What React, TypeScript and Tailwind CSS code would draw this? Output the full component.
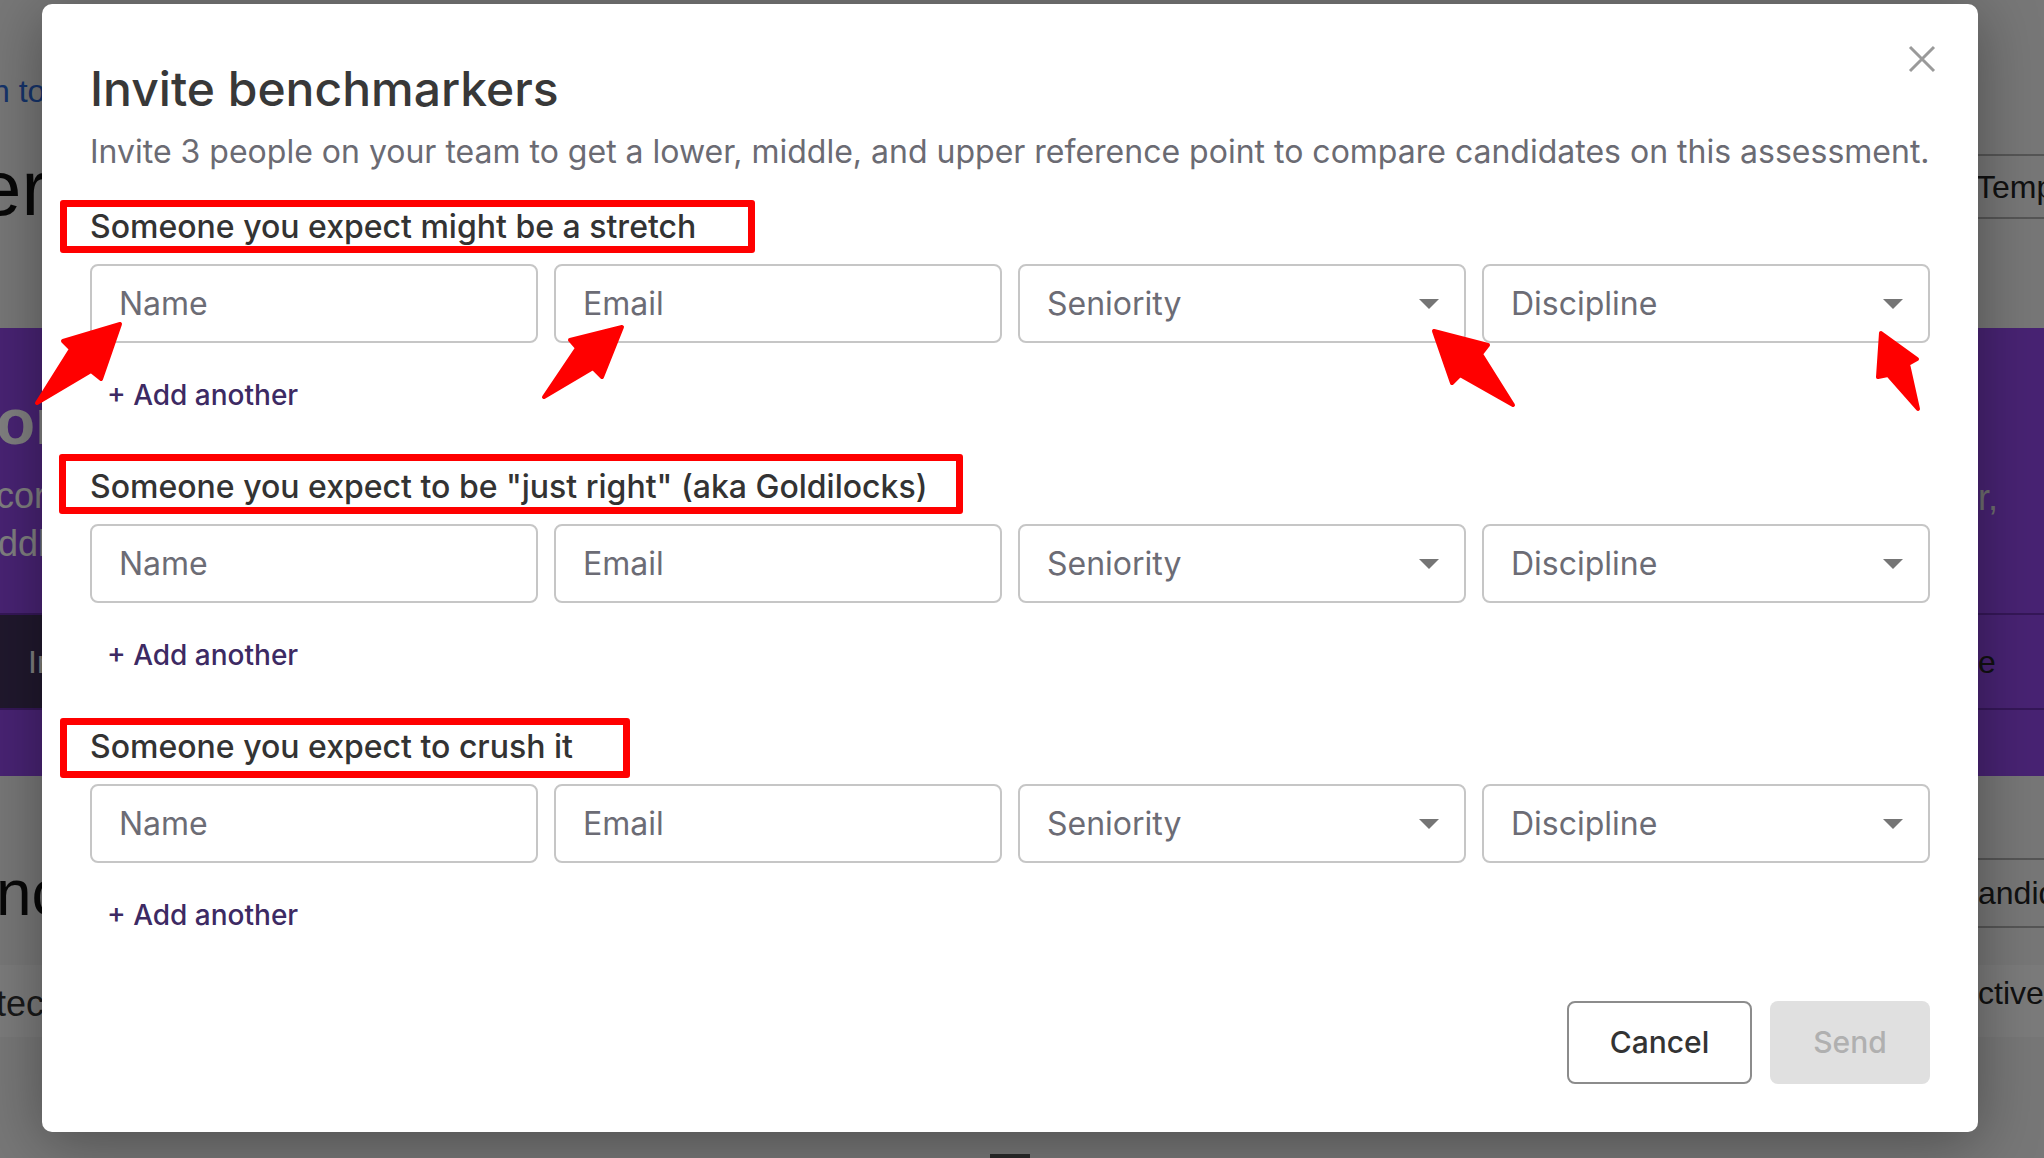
import React from 'react';

const sections = [
  'Someone you expect might be a stretch',
  'Someone you expect to be "just right" (aka Goldilocks)',
  'Someone you expect to crush it',
];

// red annotation boxes drawn on top of the screenshot
const marks = [
  'left-[60px] top-[200px] w-[695px] h-[53px]',
  'left-[59px] top-[454px] w-[904px] h-[60px]',
  'left-[60px] top-[718px] w-[570px] h-[60px]',
];

const arrows = [
  '120,324 63,341 71,349 37,403 91,371 101,379',
  '622,327 570,340 577,348 544,397 593,368 602,377',
  '1434,331 1488,345 1481,354 1513,405 1460,375 1452,383',
  '1881,333 1917,359 1908,364 1918,409 1888,375 1878,377',
];

const TextField: React.FC<{ placeholder: string }> = ({ placeholder }) => (
  <div className="flex h-[79px] items-center rounded-[8px] border-2 border-[#c6c6c6] bg-white px-[27px]">
    <span className="text-[32px] leading-[40px] text-[#6c6c75]">{placeholder}</span>
  </div>
);

const SelectField: React.FC<{ placeholder: string }> = ({ placeholder }) => (
  <div className="flex h-[79px] items-center justify-between rounded-[8px] border-2 border-[#c6c6c6] bg-white pl-[27px] pr-[25px]">
    <span className="text-[32px] leading-[40px] text-[#6c6c75]">{placeholder}</span>
    <svg width="20" height="10" viewBox="0 0 20 10">
      <path d="M0 0h20L10 10z" fill="#757575" />
    </svg>
  </div>
);

const Section: React.FC<{ label: string }> = ({ label }) => (
  <div className="flex flex-col items-start">
    <h3 className="text-[32px] leading-[40px] font-medium text-[#333333]">{label}</h3>
    <div className="mt-[17px] grid w-full grid-cols-4 gap-4">
      <TextField placeholder="Name" />
      <TextField placeholder="Email" />
      <SelectField placeholder="Seniority" />
      <SelectField placeholder="Discipline" />
    </div>
    <button className="mt-[32px] ml-[17px] text-[28px] leading-[40px] font-medium text-[#3d2a63]">
      + Add another
    </button>
  </div>
);

const App: React.FC = () => {
  return (
    <div className="relative h-[1158px] w-full overflow-hidden bg-[#eeeeee] font-['Liberation_Sans',sans-serif]">
      {/* page behind the dialog */}
      <div className="flex h-[328px] justify-between">
        <div className="pt-[72px]">
          <div className="-ml-[8px] whitespace-nowrap text-[32px] leading-[38px] text-[#2a66d4]">n to assessments</div>
          <div className="mt-[38px] -ml-[22px] whitespace-nowrap text-[78px] leading-[80px] text-[#111111]">er</div>
        </div>
        <div className="w-[80px] shrink-0 pt-[154px]">
          <div className="flex h-[65px] items-center whitespace-nowrap border-y-2 border-[#aaaaaa] pl-[12px] text-[32px] text-[#222222]">
            Template
          </div>
        </div>
      </div>

      <div className="flex h-[448px] flex-col bg-[#9046e6]">
        <div className="flex h-[285px] justify-between">
          <div className="pt-[54px]">
            <div className="-ml-[4px] whitespace-nowrap text-[64px] leading-[80px] font-bold text-white">or</div>
            <div className="mt-[10px] -ml-[4px] whitespace-nowrap text-[36px] leading-[48px] text-white">core</div>
            <div className="-ml-[2px] whitespace-nowrap text-[36px] leading-[48px] text-white">ddl</div>
          </div>
          <div className="w-[66px] shrink-0 pt-[146px] text-[36px] leading-[48px] text-[#dddddd]">r,</div>
        </div>
        <div className="flex h-[97px] justify-between border-y-2 border-[#6a2fb0]">
          <div className="flex w-[120px] items-center bg-[#40305a] pl-[28px] text-[32px] text-white">Ir</div>
          <div className="flex w-[66px] shrink-0 items-center text-[32px] text-[#222222]">e</div>
        </div>
      </div>

      <div className="flex h-[382px] flex-col">
        <div className="h-[82px]" />
        <div className="flex h-[70px] items-center justify-between">
          <div className="-ml-[4px] whitespace-nowrap text-[64px] leading-[70px] text-[#111111]">nc</div>
          <div className="flex h-full w-[66px] shrink-0 items-center whitespace-nowrap border-y-2 border-[#aaaaaa] text-[32px] text-[#222222]">
            andid
          </div>
        </div>
        <div className="mt-[37px] flex h-[72px] justify-between bg-[#f7f7f7]">
          <div className="-ml-[4px] self-center whitespace-nowrap pt-[6px] text-[36px] text-[#333333]">tec</div>
          <div className="w-[66px] shrink-0 whitespace-nowrap pt-[4px] text-[32px] text-[#222222]">ctive</div>
        </div>
        <div className="mt-auto flex justify-center">
          <div className="ml-[-24px] h-[4px] w-[40px] bg-[#555555]" />
        </div>
      </div>

      <div className="absolute inset-0 bg-black/50" />

      {/* dialog */}
      <div className="absolute left-[42px] top-[4px] flex h-[1128px] w-[1936px] flex-col rounded-[10px] bg-white px-[48px] pt-[61px] pb-[48px] font-['Inter',sans-serif] shadow-[0_10px_60px_rgba(0,0,0,0.35)]">
        <button className="absolute right-[42px] top-[41px]">
          <svg width="28" height="28" viewBox="0 0 28 28">
            <path d="M2 2l24 24M26 2L2 26" stroke="#9a9a9a" strokeWidth="3" />
          </svg>
        </button>
        <h2 className="text-[48px] leading-[48px] font-medium text-[#383838]">Invite benchmarkers</h2>
        <p className="mt-[19px] whitespace-nowrap text-[32px] leading-[40px] text-[#6b6b73]">
          Invite 3 people on your team to get a lower, middle, and upper reference point to compare candidates on this assessment.
        </p>
        <div className="mt-[35px] flex flex-col gap-[52px]">
          {sections.map((s) => (
            <Section key={s} label={s} />
          ))}
        </div>
        <div className="mt-auto flex justify-end gap-[18px]">
          <button className="h-[83px] w-[185px] rounded-[8px] border-2 border-[#8c8c8c] text-[30px] font-medium text-[#333333]">
            Cancel
          </button>
          <button className="h-[83px] w-[160px] rounded-[8px] bg-[#e0e0e0] text-[30px] font-medium text-[#b0b0b0]">
            Send
          </button>
        </div>
      </div>

      {/* annotations */}
      {marks.map((m) => (
        <div key={m} className={`absolute rounded-[3px] border-[7px] border-[#ff0000] ${m}`} />
      ))}
      <svg className="pointer-events-none absolute inset-0" width="2044" height="1158" viewBox="0 0 2044 1158">
        {arrows.map((p) => (
          <polygon key={p} points={p} fill="#ff0000" stroke="#ff0000" strokeWidth="4" strokeLinejoin="round" />
        ))}
      </svg>
    </div>
  );
};

export default App;
